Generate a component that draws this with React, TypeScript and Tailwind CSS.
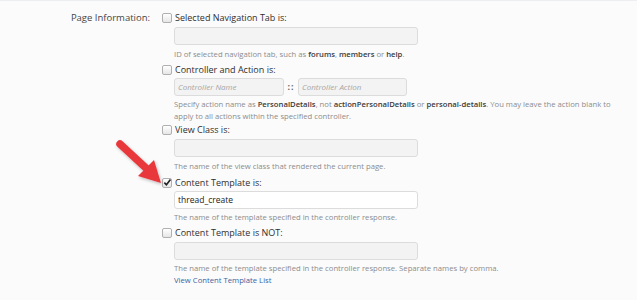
import React from "react";

const font = { fontFamily: '"Open Sans", "Noto Sans", sans-serif' };

function Box({ checked = false }: { checked?: boolean }) {
  return (
    <span className="relative inline-block w-[10px] h-[10px] shrink-0 rounded-[2px] border border-[#b0b0b0] bg-gradient-to-b from-[#ffffff] to-[#e6e6e6]">
      {checked && (
        <svg viewBox="0 0 10 10" className="absolute left-[0px] top-[-1px] w-[9px] h-[9px]">
          <path d="M1.5 5.2 L3.8 7.6 L8.3 1.8" fill="none" stroke="#222" strokeWidth="1.8" />
        </svg>
      )}
    </span>
  );
}

function Label({ text, checked }: { text: string; checked?: boolean }) {
  return (
    <div className="flex items-center h-[14px] gap-[3px]">
      <Box checked={checked} />
      <span className="text-[9px] leading-[14px] text-[#2f2f2f]">{text}</span>
    </div>
  );
}

function Field({ value, white, mt }: { value?: string; white?: boolean; mt: string }) {
  return (
    <div
      className={
        "ml-[12px] w-[244px] h-[18px] rounded-[3px] border border-[#dcdcdc] px-[3px] flex items-center text-[8.5px] text-[#222] " +
        mt +
        " " +
        (white ? "bg-white" : "bg-[#f3f3f3]")
      }
    >
      {value}
    </div>
  );
}

function Hint({ children, mt }: { children: React.ReactNode; mt: string }) {
  return <div className={"ml-[12px] text-[7.7px] leading-[12px] text-[#8c8c8c] " + mt}>{children}</div>;
}

const B = ({ children }: { children: React.ReactNode }) => (
  <span className="font-semibold text-[#3a3a3a]">{children}</span>
);

export default function App() {
  return (
    <div style={font} className="relative w-[637px] h-[300px] overflow-hidden bg-[#fbfbfc] border-t border-[#eceef1]">
      <div className="flex pt-[10px]">
        <div className="w-[162px] pr-[12px] text-right text-[9.5px] leading-[14px] text-[#454545]">Page Information:</div>
        <div className="flex flex-col">
          <div className="pb-[3px]">
            <Label text="Selected Navigation Tab is:" />
            <Field mt="mt-[2px]" />
            <Hint mt="mt-[3px]">
              ID of selected navigation tab, such as <B>forums</B>, <B>members</B> or <B>help</B>.
            </Hint>
          </div>
          <div className="pb-[1px]">
            <Label text="Controller and Action is:" />
            <div className="ml-[12px] mt-[1px] flex items-center h-[18px]">
              <div className="w-[110px] h-[18px] rounded-[3px] border border-[#dcdcdc] bg-[#f3f3f3] px-[3px] flex items-center text-[8px] italic text-[#a6a6a6]">
                Controller Name
              </div>
              <span className="w-[14px] text-center text-[9px] font-bold tracking-[1px] text-[#666]">::</span>
              <div className="w-[109px] h-[18px] rounded-[3px] border border-[#dcdcdc] bg-[#f3f3f3] px-[3px] flex items-center text-[8px] italic text-[#a6a6a6]">
                Controller Action
              </div>
            </div>
            <Hint mt="mt-[2px]">
              Specify action name as <B>PersonalDetails</B>, not <B>actionPersonalDetails</B> or <B>personal-details</B>. You may leave the action blank to
              <br />
              apply to all actions within the specified controller.
            </Hint>
          </div>
          <div className="pb-[4px]">
            <Label text="View Class is:" />
            <Field mt="mt-[2px]" />
            <Hint mt="mt-[3px]">The name of the view class that rendered the current page.</Hint>
          </div>
          <div className="pb-[3px]">
            <Label text="Content Template is:" checked />
            <Field value="thread_create" white mt="mt-[1px]" />
            <Hint mt="mt-[2px]">The name of the template specified in the controller response.</Hint>
          </div>
          <div>
            <Label text="Content Template is NOT:" />
            <Field mt="mt-[2px]" />
            <Hint mt="mt-[2px]">
              The name of the template specified in the controller response. Separate names by comma.
              <br />
              <span className="text-[#3b62a0]">View Content Template List</span>
            </Hint>
          </div>
        </div>
      </div>
      <svg className="absolute left-0 top-0 w-[637px] h-[300px] pointer-events-none" viewBox="0 0 637 300">
        <defs>
          <filter id="sh" x="-50%" y="-50%" width="200%" height="200%">
            <feDropShadow dx="1" dy="1.5" stdDeviation="1.5" floodColor="#000" floodOpacity="0.25" />
          </filter>
        </defs>
        <g filter="url(#sh)">
          <line x1="120" y1="143" x2="147" y2="168" stroke="#e8393b" strokeWidth="7.5" strokeLinecap="round" />
          <polygon points="161,182 138,175 154,159" fill="#e8393b" />
        </g>
      </svg>
    </div>
  );
}
